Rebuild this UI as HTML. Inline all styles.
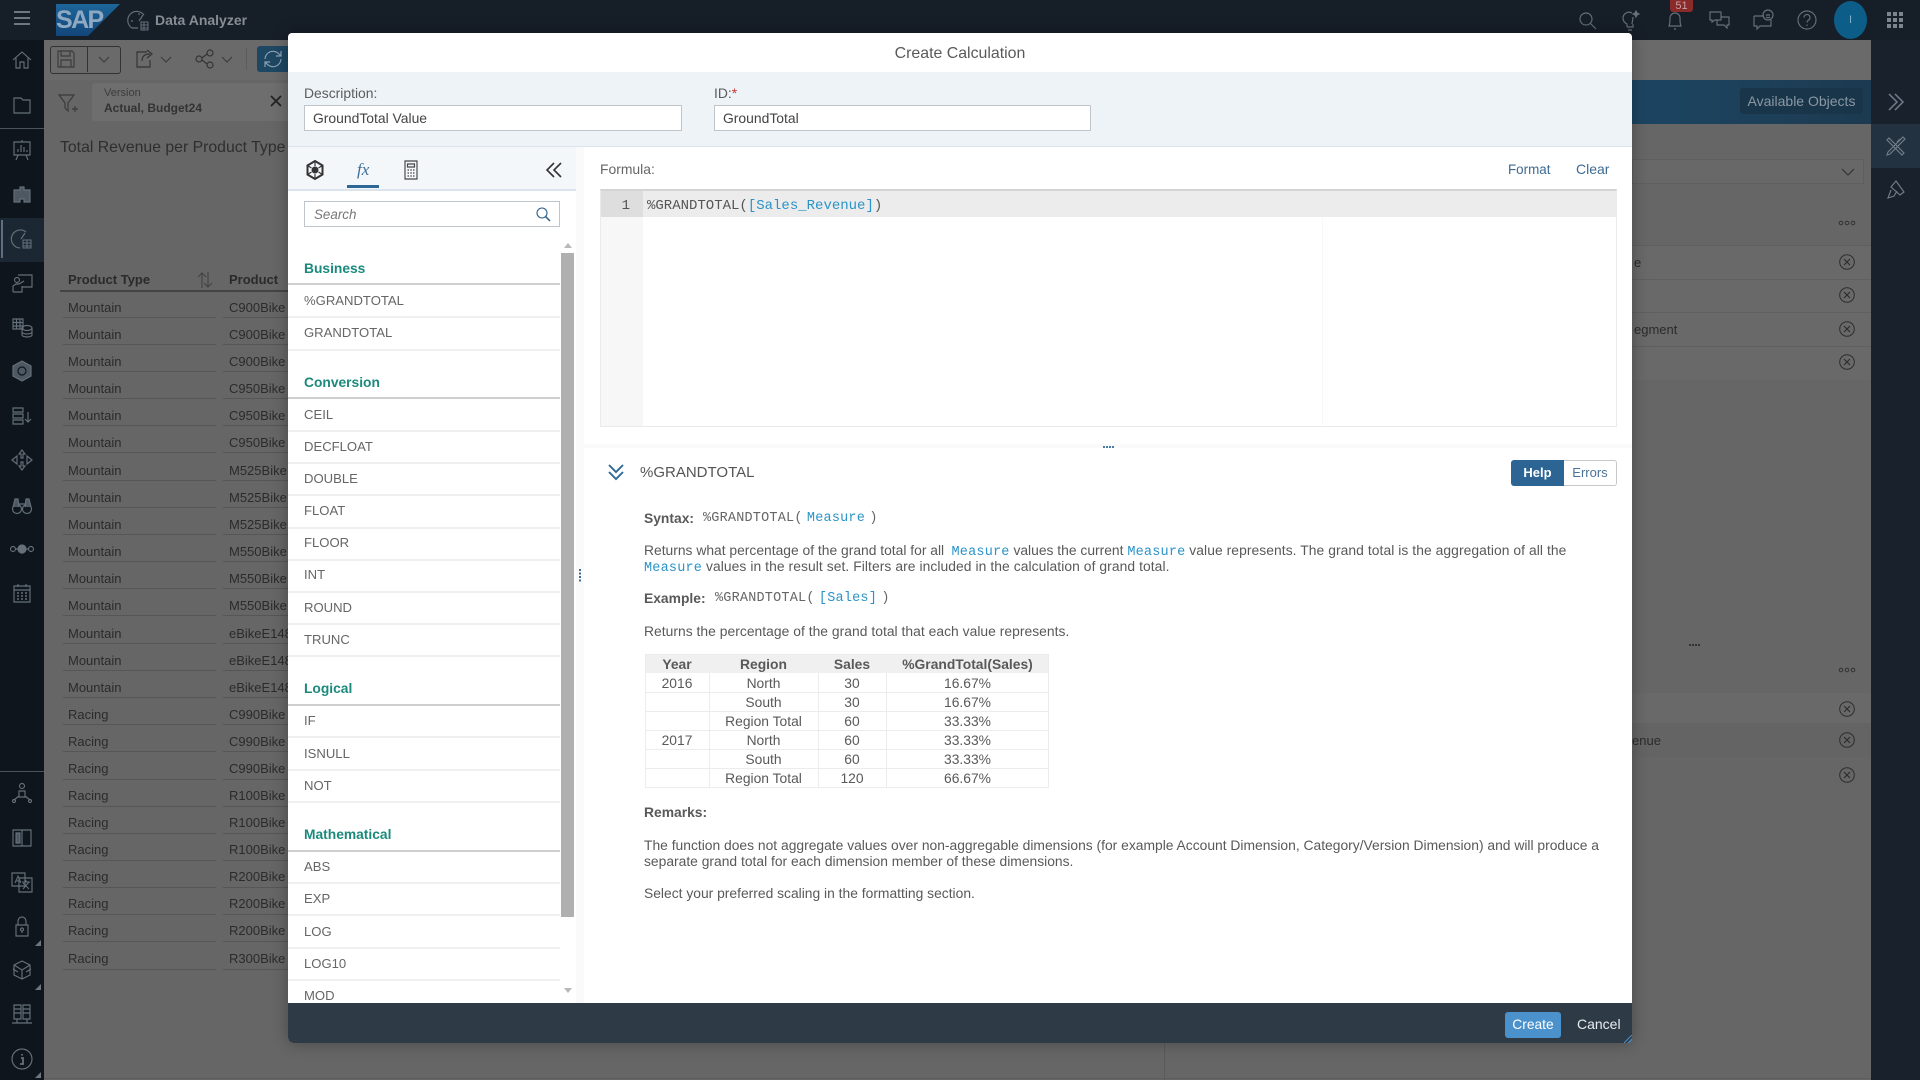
<!DOCTYPE html>
<html><head><meta charset="utf-8"><title>Create Calculation</title>
<style>
html,body{margin:0;padding:0;width:1920px;height:1080px;overflow:hidden;background:#666;font-family:"Liberation Sans",sans-serif;font-size:13px;color:#555}
.a{position:absolute}
.t{position:absolute;white-space:nowrap;line-height:18px;height:18px}
svg.i{position:absolute;width:24px;height:24px;fill:none;stroke:#65707a;stroke-width:1.15}
.rt{color:#2b2b2b;font-size:13px;margin-top:1px}
.rl{position:absolute;height:1px;background:#565656}
.li{position:absolute;left:304px;white-space:nowrap;line-height:18px;color:#666;font-size:13.1px;margin-top:1px}
.ll{position:absolute;left:288px;width:272px;height:2px;background:#f0f0f0}
.gh{position:absolute;left:304px;white-space:nowrap;line-height:18px;color:#1b8a7c;font-size:13.8px;font-weight:bold;margin-top:1px}
.gl{position:absolute;left:288px;width:272px;height:2px;background:#cfcfcf}
.m{font-family:"Liberation Mono",monospace;font-size:13.5px;letter-spacing:.2px;word-spacing:-4px}
.b{color:#2a93c8}
.h{color:#595959;font-size:13.85px}
.th{position:absolute;text-align:center;line-height:19px;height:19px;color:#595959;font-size:13.85px;margin-top:1px}
.xc{position:absolute;width:16px;height:16px;left:1839px}
</style></head><body>

<!-- background app -->
<div class="a" style="left:0;top:0;width:1920px;height:40px;background:#161e28"></div>
<div class="a" style="left:44px;top:40px;width:1827px;height:1040px;background:#666"></div>
<div class="a" style="left:44px;top:40px;width:1827px;height:40px;background:#6a6a6a"></div>
<div class="a" style="left:0;top:40px;width:44px;height:1040px;background:#0e151c"></div>
<div class="a" style="left:0;top:128px;width:44px;height:1px;background:#4c545b"></div>
<div class="a" style="left:0;top:771px;width:44px;height:1px;background:#4c545b"></div>
<div class="a" style="left:0;top:218px;width:44px;height:44px;background:#1b2733"></div>
<div class="a" style="left:1px;top:220px;width:2px;height:38px;background:#5f6f80"></div>

<!-- hamburger -->
<div class="a" style="left:14px;top:11px;width:16px;height:2px;background:#6f7880"></div>
<div class="a" style="left:14px;top:17px;width:16px;height:2px;background:#6f7880"></div>
<div class="a" style="left:14px;top:23px;width:16px;height:2px;background:#6f7880"></div>

<!-- SAP logo -->
<svg class="a" style="left:56px;top:4px;width:64px;height:32px" viewBox="0 0 64 32"><defs><linearGradient id="g" x1="0" y1="0" x2="0" y2="1"><stop offset="0" stop-color="#1d6699"/><stop offset="1" stop-color="#13467a"/></linearGradient></defs><polygon points="0,0 64,0 32,32 0,32" fill="url(#g)"/></svg>
<div class="t" style="left:56px;top:8px;height:24px;line-height:24px;font-size:25px;font-weight:bold;letter-spacing:-1.6px;color:#8fa9c2">SAP</div>
<svg class="i" style="left:127px;top:9px" viewBox="0 0 24 24"><path d="M17 6A9 9 0 1 0 5 19h6M12 12l4-6M4 12h2M12 4v2"/><path d="M14 13h7v8h-7zM14 16h7M14 19h7M17 13v8" stroke-width="1"/></svg>
<div class="t" style="left:155px;top:11px;font-weight:bold;font-size:14px;color:#868d94">Data Analyzer</div>

<!-- shell icons -->
<svg class="i" style="left:1575px;top:8px" viewBox="0 0 24 24"><circle cx="11" cy="11" r="6"/><path d="M15.5 15.5L21 21"/></svg>
<svg class="i" style="left:1618px;top:8px" viewBox="0 0 24 24"><path d="M9 19v-3c-2-1-4-3-4-6a6 6 0 0 1 9-5M15 16v3H9M10 22h4M15 9c0 3-1 5-1 7"/><path d="M18 3l1 2 2 1-2 1-1 2-1-2-2-1 2-1z" fill="#65707a"/></svg>
<svg class="i" style="left:1663px;top:8px" viewBox="0 0 24 24"><path d="M6 18c1-2 1-4 1-8a5 5 0 0 1 10 0c0 4 0 6 1 8zM11 21h2"/></svg>
<div class="a" style="left:1670px;top:0;width:23px;height:12px;background:#8b2a2a;border-radius:0 0 3px 3px;color:#c9a0a0;font-size:11px;line-height:12px;text-align:center">51</div>
<svg class="i" style="left:1707px;top:8px" viewBox="0 0 24 24"><path d="M3 4h11v8H8l-3 2v-2H3zM10 12v5h7l3 3v-3h2V9h-8"/></svg>
<svg class="i" style="left:1751px;top:8px" viewBox="0 0 24 24"><path d="M3 8h10M3 8v10h3v3l3-3h11v-6"/><circle cx="17" cy="7" r="5"/><path d="M15 7h4M15 9c1 1 3 1 4 0"/></svg>
<svg class="i" style="left:1795px;top:8px" viewBox="0 0 24 24"><circle cx="12" cy="12" r="9"/><path d="M9 9.5a3 3 0 1 1 4.5 2.6c-1 .6-1.5 1.2-1.5 2.4M12 16.5v1.5"/></svg>
<div class="a" style="left:1834px;top:1px;width:33px;height:38px;border-radius:50%;background:#0d5d89;color:#7fb0cb;font-size:11px;line-height:38px;text-align:center">I</div>
<div class="a" style="left:1887px;top:12px;width:16px;height:16px;background:repeating-linear-gradient(90deg,#7d858c 0 4px,transparent 4px 6px);"></div>
<div class="a" style="left:1887px;top:16px;width:16px;height:2px;background:#161e28"></div>
<div class="a" style="left:1887px;top:22px;width:16px;height:2px;background:#161e28"></div>

<!-- sidebar icons -->
<svg class="i" style="left:10px;top:48px" viewBox="0 0 24 24"><path d="M3 12l9-8 9 8M6 10v10h4v-6h4v6h4V10"/></svg>
<svg class="i" style="left:10px;top:93px" viewBox="0 0 24 24"><path d="M4 5h7l2 2h7v13H4z"/></svg>
<svg class="i" style="left:10px;top:138px" viewBox="0 0 24 24"><path d="M4 4h16v13H4zM12 2v2M8 17l-2 5M16 17l2 5M8 14v-3M11 14V7M14 14V9M17 14v-2"/></svg>
<svg class="i" style="left:10px;top:183px" viewBox="0 0 24 24"><path d="M4 7h6V4h4v3h6v12h-6v-3h-4v3H4z" fill="#4e5862"/></svg>
<svg class="i" style="left:10px;top:227px" viewBox="0 0 24 24"><path d="M16 5a9 9 0 1 0-6 16M11 12l4-6"/><path d="M13 13h8v8h-8zM13 16h8M13 19h8M17 13v8" stroke-width="1"/></svg>
<svg class="i" style="left:10px;top:271px" viewBox="0 0 24 24"><path d="M8 4h14v12H12"/><circle cx="7" cy="9" r="2.5"/><path d="M3 21v-6l3-2h3l5-3M3 21h9v-6"/></svg>
<svg class="i" style="left:10px;top:315px" viewBox="0 0 24 24"><path d="M3 4h10v10H3zM3 7.5h10M3 11h10M6.5 4v10M10 4v10"/><ellipse cx="17" cy="13" rx="5" ry="2.5"/><path d="M12 13v7c0 1 2 2 5 2s5-1 5-2v-7M12 17c0 1 2 2 5 2s5-1 5-2"/></svg>
<svg class="i" style="left:10px;top:359px" viewBox="0 0 24 24"><path d="M12 2l9 5v10l-9 5-9-5V7z" fill="#4e5862"/><circle cx="12" cy="12" r="4" stroke="#0e151c"/></svg>
<svg class="i" style="left:10px;top:404px" viewBox="0 0 24 24"><path d="M3 4h10v4H3zM3 10h10v4H3zM3 16h10v4H3zM18 8v10M15 15l3 3 3-3"/></svg>
<svg class="i" style="left:10px;top:448px" viewBox="0 0 24 24"><path d="M12 2l3 4h-2v4h-2V6H9zM12 22l-3-4h2v-4h2v4h2zM2 12l5-4v8zM22 12l-5-4v8z"/></svg>
<svg class="i" style="left:10px;top:493px" viewBox="0 0 24 24"><circle cx="7" cy="16" r="4.5"/><circle cx="17" cy="16" r="4.5"/><path d="M3 14l2-8h3l1 8M21 14l-2-8h-3l-1 8M9 11h6" fill="#4e5862"/></svg>
<svg class="i" style="left:10px;top:537px" viewBox="0 0 24 24"><circle cx="3" cy="12" r="2.5"/><circle cx="21" cy="12" r="2.5"/><circle cx="12" cy="12" r="4" fill="#65707a"/><path d="M5.5 12H8M16 12h2.5"/></svg>
<svg class="i" style="left:10px;top:581px" viewBox="0 0 24 24"><path d="M4 5h16v16H4zM4 9h16M8 3v3M16 3v3"/><path d="M7 12h2M11 12h2M15 12h2M7 15h2M11 15h2M15 15h2M7 18h2M11 18h2M15 18h2" stroke-width="1.6"/></svg>
<svg class="i" style="left:10px;top:781px" viewBox="0 0 24 24"><circle cx="12" cy="5" r="2.5"/><path d="M9 10h6v6H9zM9 15l-5 4M15 15l5 4"/><circle cx="4" cy="20" r="1.5"/><circle cx="20" cy="20" r="1.5"/></svg>
<svg class="i" style="left:10px;top:826px" viewBox="0 0 24 24"><path d="M3 4h18v16H3zM12 4v16M3 20h18"/><path d="M6 7h4v10H6z" fill="#4e5862"/></svg>
<svg class="i" style="left:10px;top:870px" viewBox="0 0 24 24"><path d="M2 3h13v13H2zM9 8h13v14H9z"/><path d="M5 13l3-7 3 7M6 11h4M12 12h8M16 10v2M13 19l6-7M13 13l6 6" stroke-width="1"/></svg>
<svg class="i" style="left:10px;top:914px" viewBox="0 0 24 24"><path d="M6 11h12v11H6zM8 11V7a4 4 0 0 1 8 0v4"/><circle cx="12" cy="15.5" r="1.5"/><path d="M12 17v2"/></svg>
<svg class="i" style="left:10px;top:958px" viewBox="0 0 24 24"><path d="M12 3l8 4v10l-8 4-8-4V7zM4 7l8 5 8-5M12 12v9M3 11l5 3M21 11l-5 3"/></svg>
<svg class="i" style="left:10px;top:1002px" viewBox="0 0 24 24"><path d="M4 3h7v14H4zM13 3h7v14h-7zM4 7h7M13 7h7M4 11h7M13 11h7M2 21h20M7 17v4M17 17v4"/></svg>
<svg class="i" style="left:10px;top:1047px" viewBox="0 0 24 24"><circle cx="12" cy="12" r="10"/><path d="M11 11h2v6M10 17h4M12 7v1.5" stroke-width="1.8"/></svg>
<svg class="a" style="left:35px;top:940px;width:6px;height:6px" viewBox="0 0 6 6"><polygon points="6,0 6,6 0,6" fill="#6d767e"/></svg>
<svg class="a" style="left:35px;top:984px;width:6px;height:6px" viewBox="0 0 6 6"><polygon points="6,0 6,6 0,6" fill="#6d767e"/></svg>
<svg class="a" style="left:35px;top:1072px;width:6px;height:6px" viewBox="0 0 6 6"><polygon points="6,0 6,6 0,6" fill="#6d767e"/></svg>

<!-- toolbar -->
<div class="a" style="left:50px;top:46px;width:69px;height:26px;border:1px solid #333;border-radius:3px;box-sizing:content-box"></div>
<div class="a" style="left:87px;top:46px;width:1px;height:26px;background:#333"></div>
<svg class="i" style="left:54px;top:47px" viewBox="0 0 24 24" ><path d="M4 4h14l2 2v14H4zM7 4v5h9V4M7 20v-7h10v7" stroke="#3a3a3a"/></svg>
<svg class="i" style="left:92px;top:47px" viewBox="0 0 24 24"><path d="M7 10l5 5 5-5" stroke="#3d3d3d"/></svg>
<svg class="i" style="left:133px;top:47px" viewBox="0 0 24 24"><path d="M14 5H4v15h13v-7M9 14c0-5 3-7 8-7M14 3l5 4-5 4" stroke="#333"/></svg>
<svg class="i" style="left:154px;top:47px" viewBox="0 0 24 24"><path d="M7 10l5 5 5-5" stroke="#3d3d3d"/></svg>
<svg class="i" style="left:193px;top:47px" viewBox="0 0 24 24"><circle cx="6" cy="12" r="3" stroke="#333"/><circle cx="17" cy="6" r="3" stroke="#333"/><circle cx="17" cy="18" r="3" stroke="#333"/><path d="M9 11l5-4M9 13l5 4" stroke="#333"/></svg>
<svg class="i" style="left:215px;top:47px" viewBox="0 0 24 24"><path d="M7 10l5 5 5-5" stroke="#3d3d3d"/></svg>
<div class="a" style="left:246px;top:48px;width:1px;height:22px;background:#5c5c5c"></div>
<div class="a" style="left:257px;top:46px;width:40px;height:26px;background:#1e4763;border-radius:3px"></div>
<svg class="i" style="left:261px;top:47px" viewBox="0 0 24 24"><path d="M4 12a8 8 0 0 1 14-5l2 2M20 12a8 8 0 0 1-14 5l-2-2M20 4v5h-5M4 20v-5h5" stroke="#8ea3b4"/></svg>

<!-- filter row -->
<svg class="i" style="left:56px;top:91px" viewBox="0 0 24 24"><path d="M3 4h15l-6 8v8l-3-3v-5zM16 18h6M19 15v6" stroke="#3a3a3a"/></svg>
<div class="a" style="left:92px;top:83px;width:210px;height:38px;background:#6e6e6e;border-radius:3px"></div>
<div class="t" style="left:104px;top:84px;font-size:11px;color:#3c3c3c">Version</div>
<div class="t" style="left:104px;top:99px;font-size:12px;font-weight:bold;color:#333">Actual, Budget24</div>
<svg class="i" style="left:264px;top:89px" viewBox="0 0 24 24"><path d="M7 7l10 10M17 7L7 17" stroke="#222" stroke-width="1.8"/></svg>
<div class="t" style="left:60px;top:139px;font-size:15.8px;color:#2e2e2e">Total Revenue per Product Type</div>

<!-- bg table -->
<div class="t" style="left:68px;top:271px;font-weight:bold;color:#2a2a2a">Product Type</div>
<svg class="i" style="left:193px;top:268px" viewBox="0 0 24 24"><path d="M9 20V5M5 9l4-4 4 4M15 4v15M11 15l4 4 4-4" stroke="#444"/></svg>
<div class="t" style="left:229px;top:271px;font-weight:bold;color:#2a2a2a">Product</div>
<div class="a" style="left:60px;top:290px;width:240px;height:2px;background:#444"></div>

<div class="t rt" style="left:68px;top:298px">Mountain</div><div class="t rt" style="left:229px;top:298px">C900Bike</div><div class="rl" style="left:63px;top:317px;width:153px"></div><div class="rl" style="left:223px;top:317px;width:70px"></div>
<div class="t rt" style="left:68px;top:325px">Mountain</div><div class="t rt" style="left:229px;top:325px">C900Bike</div><div class="rl" style="left:63px;top:344px;width:153px"></div><div class="rl" style="left:223px;top:344px;width:70px"></div>
<div class="t rt" style="left:68px;top:352px">Mountain</div><div class="t rt" style="left:229px;top:352px">C900Bike</div><div class="rl" style="left:63px;top:371px;width:153px"></div><div class="rl" style="left:223px;top:371px;width:70px"></div>
<div class="t rt" style="left:68px;top:379px">Mountain</div><div class="t rt" style="left:229px;top:379px">C950Bike</div><div class="rl" style="left:63px;top:398px;width:153px"></div><div class="rl" style="left:223px;top:398px;width:70px"></div>
<div class="t rt" style="left:68px;top:406px">Mountain</div><div class="t rt" style="left:229px;top:406px">C950Bike</div><div class="rl" style="left:63px;top:425px;width:153px"></div><div class="rl" style="left:223px;top:425px;width:70px"></div>
<div class="t rt" style="left:68px;top:433px">Mountain</div><div class="t rt" style="left:229px;top:433px">C950Bike</div><div class="rl" style="left:63px;top:452px;width:153px"></div><div class="rl" style="left:223px;top:452px;width:70px"></div>
<div class="t rt" style="left:68px;top:461px">Mountain</div><div class="t rt" style="left:229px;top:461px">M525Bike</div><div class="rl" style="left:63px;top:480px;width:153px"></div><div class="rl" style="left:223px;top:480px;width:70px"></div>
<div class="t rt" style="left:68px;top:488px">Mountain</div><div class="t rt" style="left:229px;top:488px">M525Bike</div><div class="rl" style="left:63px;top:507px;width:153px"></div><div class="rl" style="left:223px;top:507px;width:70px"></div>
<div class="t rt" style="left:68px;top:515px">Mountain</div><div class="t rt" style="left:229px;top:515px">M525Bike</div><div class="rl" style="left:63px;top:534px;width:153px"></div><div class="rl" style="left:223px;top:534px;width:70px"></div>
<div class="t rt" style="left:68px;top:542px">Mountain</div><div class="t rt" style="left:229px;top:542px">M550Bike</div><div class="rl" style="left:63px;top:561px;width:153px"></div><div class="rl" style="left:223px;top:561px;width:70px"></div>
<div class="t rt" style="left:68px;top:569px">Mountain</div><div class="t rt" style="left:229px;top:569px">M550Bike</div><div class="rl" style="left:63px;top:588px;width:153px"></div><div class="rl" style="left:223px;top:588px;width:70px"></div>
<div class="t rt" style="left:68px;top:596px">Mountain</div><div class="t rt" style="left:229px;top:596px">M550Bike</div><div class="rl" style="left:63px;top:615px;width:153px"></div><div class="rl" style="left:223px;top:615px;width:70px"></div>
<div class="t rt" style="left:68px;top:624px">Mountain</div><div class="t rt" style="left:229px;top:624px">eBikeE148</div><div class="rl" style="left:63px;top:643px;width:153px"></div><div class="rl" style="left:223px;top:643px;width:70px"></div>
<div class="t rt" style="left:68px;top:651px">Mountain</div><div class="t rt" style="left:229px;top:651px">eBikeE148</div><div class="rl" style="left:63px;top:670px;width:153px"></div><div class="rl" style="left:223px;top:670px;width:70px"></div>
<div class="t rt" style="left:68px;top:678px">Mountain</div><div class="t rt" style="left:229px;top:678px">eBikeE148</div><div class="rl" style="left:63px;top:697px;width:153px"></div><div class="rl" style="left:223px;top:697px;width:70px"></div>
<div class="t rt" style="left:68px;top:705px">Racing</div><div class="t rt" style="left:229px;top:705px">C990Bike</div><div class="rl" style="left:63px;top:724px;width:153px"></div><div class="rl" style="left:223px;top:724px;width:70px"></div>
<div class="t rt" style="left:68px;top:732px">Racing</div><div class="t rt" style="left:229px;top:732px">C990Bike</div><div class="rl" style="left:63px;top:751px;width:153px"></div><div class="rl" style="left:223px;top:751px;width:70px"></div>
<div class="t rt" style="left:68px;top:759px">Racing</div><div class="t rt" style="left:229px;top:759px">C990Bike</div><div class="rl" style="left:63px;top:779px;width:153px"></div><div class="rl" style="left:223px;top:779px;width:70px"></div>
<div class="t rt" style="left:68px;top:786px">Racing</div><div class="t rt" style="left:229px;top:786px">R100Bike</div><div class="rl" style="left:63px;top:806px;width:153px"></div><div class="rl" style="left:223px;top:806px;width:70px"></div>
<div class="t rt" style="left:68px;top:813px">Racing</div><div class="t rt" style="left:229px;top:813px">R100Bike</div><div class="rl" style="left:63px;top:833px;width:153px"></div><div class="rl" style="left:223px;top:833px;width:70px"></div>
<div class="t rt" style="left:68px;top:840px">Racing</div><div class="t rt" style="left:229px;top:840px">R100Bike</div><div class="rl" style="left:63px;top:860px;width:153px"></div><div class="rl" style="left:223px;top:860px;width:70px"></div>
<div class="t rt" style="left:68px;top:867px">Racing</div><div class="t rt" style="left:229px;top:867px">R200Bike</div><div class="rl" style="left:63px;top:887px;width:153px"></div><div class="rl" style="left:223px;top:887px;width:70px"></div>
<div class="t rt" style="left:68px;top:894px">Racing</div><div class="t rt" style="left:229px;top:894px">R200Bike</div><div class="rl" style="left:63px;top:914px;width:153px"></div><div class="rl" style="left:223px;top:914px;width:70px"></div>
<div class="t rt" style="left:68px;top:921px">Racing</div><div class="t rt" style="left:229px;top:921px">R200Bike</div><div class="rl" style="left:63px;top:941px;width:153px"></div><div class="rl" style="left:223px;top:941px;width:70px"></div>
<div class="t rt" style="left:68px;top:949px">Racing</div><div class="t rt" style="left:229px;top:949px">R300Bike</div><div class="rl" style="left:63px;top:969px;width:153px"></div><div class="rl" style="left:223px;top:969px;width:70px"></div>

<!-- right panel -->
<div class="a" style="left:1632px;top:80px;width:239px;height:44px;background:linear-gradient(90deg,#1c4562,#1d3f58 60%,#1c3a50)"></div>
<div class="a" style="left:1740px;top:88px;width:123px;height:26px;background:#193549;border-radius:3px;color:#8a98a4;line-height:26px;text-align:center;font-size:14px">Available Objects</div>
<div class="a" style="left:1871px;top:40px;width:49px;height:1040px;background:#19222c"></div>
<div class="a" style="left:1871px;top:124px;width:49px;height:44px;background:#223240"></div>
<svg class="i" style="left:1884px;top:90px" viewBox="0 0 24 24"><path d="M5 4l8 8-8 8M11 4l8 8-8 8" stroke="#717d88" stroke-width="1.5"/></svg>
<svg class="i" style="left:1884px;top:134px" viewBox="0 0 24 24"><path d="M5 4l15 15-2 2L3 6zM19 3l2 2-15 15-3 1 1-3zM13 8l3-3" stroke="#717d88"/></svg>
<svg class="i" style="left:1884px;top:178px" viewBox="0 0 24 24"><path d="M12 3l8 11-4 3-9-8zM7 12l-3 8 6-2 3-5" stroke="#717d88"/></svg>
<div class="a" style="left:1632px;top:159px;width:232px;height:25px;border:1px solid #5f5f5f;background:#686868;box-sizing:border-box"></div>
<svg class="i" style="left:1836px;top:160px" viewBox="0 0 24 24"><path d="M6 9l6 6 6-6" stroke="#333"/></svg>
<div class="a" style="left:1632px;top:245px;width:239px;height:1px;background:#5f5f5f"></div>
<div class="a" style="left:1632px;top:246px;width:239px;height:33px;background:#696969"></div>
<div class="a" style="left:1632px;top:279px;width:239px;height:33px;background:#696969;border-top:1px solid #5f5f5f"></div>
<div class="a" style="left:1632px;top:312px;width:239px;height:33px;background:#696969;border-top:1px solid #5f5f5f"></div>
<div class="a" style="left:1632px;top:346px;width:239px;height:33px;background:#696969;border-top:1px solid #5f5f5f"></div>
<div class="a" style="left:1632px;top:693px;width:239px;height:30px;background:#696969"></div>
<div class="a" style="left:1632px;top:723px;width:239px;height:34px;background:#646464"></div>
<div class="t rt" style="left:1634px;top:253px">e</div>
<div class="t rt" style="left:1634px;top:320px">egment</div>
<div class="t rt" style="left:1632px;top:731px">enue</div>
<svg class="a" style="left:1838px;top:220px;width:18px;height:6px" viewBox="0 0 18 6"><circle cx="3" cy="3" r="1.800" fill="none" stroke="#333"/><circle cx="9" cy="3" r="1.800" fill="none" stroke="#333"/><circle cx="15" cy="3" r="1.800" fill="none" stroke="#333"/></svg>
<svg class="a" style="left:1838px;top:667px;width:18px;height:6px" viewBox="0 0 18 6"><circle cx="3" cy="3" r="1.800" fill="none" stroke="#333"/><circle cx="9" cy="3" r="1.800" fill="none" stroke="#333"/><circle cx="15" cy="3" r="1.800" fill="none" stroke="#333"/></svg>
<div class="a" style="left:1689px;top:644px;width:12px;height:2px;background:repeating-linear-gradient(90deg,#333 0 2px,transparent 2px 3px)"></div>
<svg class="xc" style="top:254px" viewBox="0 0 16 16"><circle cx="8" cy="8" r="7.3" fill="none" stroke="#2d2d2d"/><path d="M5 5l6 6M11 5l-6 6" stroke="#2d2d2d" stroke-width="1.2"/></svg>
<svg class="xc" style="top:287px" viewBox="0 0 16 16"><circle cx="8" cy="8" r="7.3" fill="none" stroke="#2d2d2d"/><path d="M5 5l6 6M11 5l-6 6" stroke="#2d2d2d" stroke-width="1.2"/></svg>
<svg class="xc" style="top:321px" viewBox="0 0 16 16"><circle cx="8" cy="8" r="7.3" fill="none" stroke="#2d2d2d"/><path d="M5 5l6 6M11 5l-6 6" stroke="#2d2d2d" stroke-width="1.2"/></svg>
<svg class="xc" style="top:354px" viewBox="0 0 16 16"><circle cx="8" cy="8" r="7.3" fill="none" stroke="#2d2d2d"/><path d="M5 5l6 6M11 5l-6 6" stroke="#2d2d2d" stroke-width="1.2"/></svg>
<svg class="xc" style="top:701px" viewBox="0 0 16 16"><circle cx="8" cy="8" r="7.3" fill="none" stroke="#2d2d2d"/><path d="M5 5l6 6M11 5l-6 6" stroke="#2d2d2d" stroke-width="1.2"/></svg>
<svg class="xc" style="top:732px" viewBox="0 0 16 16"><circle cx="8" cy="8" r="7.3" fill="none" stroke="#2d2d2d"/><path d="M5 5l6 6M11 5l-6 6" stroke="#2d2d2d" stroke-width="1.2"/></svg>
<svg class="xc" style="top:767px" viewBox="0 0 16 16"><circle cx="8" cy="8" r="7.3" fill="none" stroke="#2d2d2d"/><path d="M5 5l6 6M11 5l-6 6" stroke="#2d2d2d" stroke-width="1.2"/></svg>
<div class="a" style="left:1164px;top:1043px;width:1px;height:37px;background:#5a5a5a"></div>
<div class="a" style="left:44px;top:1078px;width:1827px;height:1px;background:#5d5d5d"></div>

<!-- MODAL -->
<div class="a" style="left:288px;top:33px;width:1344px;height:1010px;background:#fff;border-radius:4px 4px 5px 5px;box-shadow:0 0 16px rgba(0,0,0,.3)"></div>
<div class="t" style="left:288px;top:45px;width:1344px;text-align:center;font-size:15.9px;color:#5a5a5a">Create Calculation</div>
<div class="a" style="left:288px;top:72px;width:1344px;height:75px;background:#eef3f8;border-bottom:1px solid #dde3ea;box-sizing:border-box"></div>
<div class="t" style="left:304px;top:84px;color:#5c5c5c;font-size:13.9px">Description:</div>
<div class="a" style="left:304px;top:105px;width:378px;height:26px;background:#fff;border:1px solid #bfc5ca;box-sizing:border-box"></div>
<div class="t" style="left:313px;top:109px;color:#444;font-size:13.9px">GroundTotal Value</div>
<div class="t" style="left:714px;top:84px;color:#5c5c5c;font-size:13.9px">ID:<span style="color:#c33">*</span></div>
<div class="a" style="left:714px;top:105px;width:377px;height:26px;background:#fff;border:1px solid #bfc5ca;box-sizing:border-box"></div>
<div class="t" style="left:723px;top:109px;color:#444;font-size:13.9px">GroundTotal</div>

<!-- left panel -->
<div class="a" style="left:288px;top:147px;width:288px;height:42px;background:#f4f7fa;border-bottom:2px solid #dbe4ec;box-sizing:content-box"></div>
<div class="a" style="left:576px;top:147px;width:8px;height:856px;background:#fafafa"></div>
<svg class="i" style="left:303px;top:158px;width:24px;height:24px" viewBox="0 0 24 24"><path d="M12 3l7.5 4.5v9L12 21l-7.5-4.5v-9z" stroke="#333" stroke-width="2"/><circle cx="12" cy="12" r="3.5" fill="#333" stroke="none"/><path d="M12 3v5M12 16v5M4.5 7.5l4 2.5M19.5 16.500l-4-2.500M19.500 7.500l-4 2.500M4.500 16.500l4-2.500" stroke="#333"/></svg>
<div class="t" style="left:357px;top:161px;width:15px;font-family:'Liberation Serif',serif;font-style:italic;font-size:17px;color:#3f6f9b">fx</div>
<div class="a" style="left:347px;top:185px;width:32px;height:3px;background:#2d6796"></div>
<svg class="i" style="left:399px;top:158px" viewBox="0 0 24 24"><path d="M6 3h12v18H6zM8.500 6h7v3h-7zM8.500 12h1.500M11.300 12h1.500M14 12h1.500M8.500 15h1.500M11.300 15h1.500M14 15h1.500M8.500 18h1.500M11.300 18h1.500M14 18h1.500" stroke="#444"/></svg>
<svg class="i" style="left:543px;top:158px" viewBox="0 0 24 24"><path d="M11 5l-7 7 7 7M18 5l-7 7 7 7" stroke="#333" stroke-width="1.6"/></svg>

<div class="a" style="left:304px;top:201px;width:256px;height:26px;background:#fff;border:1px solid #bfc5ca;box-sizing:border-box"></div>
<div class="t" style="left:314px;top:206px;font-style:italic;color:#777;font-size:13.4px">Search</div>
<svg class="a" style="left:535px;top:206px;width:17px;height:17px" viewBox="0 0 17 17"><circle cx="7" cy="7" r="5" fill="none" stroke="#2d5f8a" stroke-width="1.1"/><path d="M10.700 10.700L15 15" stroke="#2d5f8a" stroke-width="1.500"/></svg>

<!-- scrollbar -->
<div class="a" style="left:561px;top:253px;width:13px;height:664px;background:#b0b0b0"></div>
<svg class="a" style="left:563px;top:243px;width:10px;height:6px" viewBox="0 0 10 6"><polygon points="5,0 9,5 1,5" fill="#b8b8b8"/></svg>
<svg class="a" style="left:563px;top:988px;width:10px;height:6px" viewBox="0 0 10 6"><polygon points="1,0 9,0 5,5" fill="#b8b8b8"/></svg>

<div class="gh" style="top:259px">Business</div><div class="gl" style="top:283px"></div>
<div class="li" style="top:291px">%GRANDTOTAL</div><div class="ll" style="top:316px"></div>
<div class="li" style="top:323px">GRANDTOTAL</div><div class="ll" style="top:349px"></div>
<div class="gh" style="top:373px">Conversion</div><div class="gl" style="top:397px"></div>
<div class="li" style="top:405px">CEIL</div><div class="ll" style="top:430px"></div>
<div class="li" style="top:437px">DECFLOAT</div><div class="ll" style="top:462px"></div>
<div class="li" style="top:469px">DOUBLE</div><div class="ll" style="top:494px"></div>
<div class="li" style="top:501px">FLOAT</div><div class="ll" style="top:527px"></div>
<div class="li" style="top:533px">FLOOR</div><div class="ll" style="top:559px"></div>
<div class="li" style="top:565px">INT</div><div class="ll" style="top:591px"></div>
<div class="li" style="top:598px">ROUND</div><div class="ll" style="top:623px"></div>
<div class="li" style="top:630px">TRUNC</div><div class="ll" style="top:655px"></div>
<div class="gh" style="top:679px">Logical</div><div class="gl" style="top:704px"></div>
<div class="li" style="top:711px">IF</div><div class="ll" style="top:736px"></div>
<div class="li" style="top:744px">ISNULL</div><div class="ll" style="top:769px"></div>
<div class="li" style="top:776px">NOT</div><div class="ll" style="top:801px"></div>
<div class="gh" style="top:825px">Mathematical</div><div class="gl" style="top:850px"></div>
<div class="li" style="top:857px">ABS</div><div class="ll" style="top:882px"></div>
<div class="li" style="top:889px">EXP</div><div class="ll" style="top:914px"></div>
<div class="li" style="top:922px">LOG</div><div class="ll" style="top:947px"></div>
<div class="li" style="top:954px">LOG10</div><div class="ll" style="top:979px"></div>
<div class="li" style="top:986px">MOD</div>

<div class="a" style="left:579px;top:569px;width:2px;height:13px;background:repeating-linear-gradient(180deg,#3a6d9c 0 2px,transparent 2px 3.500px)"></div>

<!-- Formula -->
<div class="t" style="left:600px;top:160px;color:#666;font-size:13.9px">Formula:</div>
<div class="t" style="left:1508px;top:161px;color:#3d6a93;font-size:13.4px">Format</div>
<div class="t" style="left:1576px;top:160px;color:#3d6a93;font-size:14px">Clear</div>
<div class="a" style="left:600px;top:189px;width:1017px;height:238px;background:#fff;border:1px solid #eaeaea;border-top:2px solid #d4d4d4;box-sizing:border-box"></div>
<div class="a" style="left:601px;top:191px;width:42px;height:235px;background:#f7f7f7"></div>
<div class="a" style="left:601px;top:191px;width:1015px;height:26px;background:#ececec"></div>
<div class="a" style="left:601px;top:191px;width:42px;height:26px;background:#dedede"></div>
<div class="a" style="left:1322px;top:217px;width:1px;height:208px;background:#f8f8f8"></div>
<div class="t" style="left:602px;top:197px;width:28px;text-align:right;font-family:'Liberation Mono',monospace;font-size:14px;color:#555">1</div>
<div class="t" style="left:647px;top:197px;font-family:'Liberation Mono',monospace;font-size:14px;color:#555">%GRANDTOTAL(<span class="b">[Sales_Revenue]</span>)</div>

<!-- splitter -->
<div class="a" style="left:584px;top:444px;width:1048px;height:4px;background:#fafafa"></div>
<div class="a" style="left:1103px;top:446px;width:11px;height:2px;background:repeating-linear-gradient(90deg,#4a7aa5 0 2px,transparent 2px 3px)"></div>

<!-- help -->
<svg class="i" style="left:604px;top:460px" viewBox="0 0 24 24"><path d="M5 5l7 7 7-7M5 12l7 7 7-7" stroke="#2d6796" stroke-width="1.900"/></svg>
<div class="t" style="left:640px;top:464px;font-size:15px;color:#555">%GRANDTOTAL</div>
<div class="a" style="left:1511px;top:460px;width:53px;height:26px;background:#2c6594;border-radius:3px 0 0 3px;color:#fff;font-weight:bold;text-align:center;line-height:26px">Help</div>
<div class="a" style="left:1564px;top:460px;width:53px;height:26px;background:#fff;border:1px solid #c6c9cc;border-left:0;box-sizing:border-box;border-radius:0 3px 3px 0;color:#4a7298;text-align:center;line-height:24px">Errors</div>

<div class="t h" style="left:644px;top:509px"><b>Syntax:</b></div>
<div class="t m" style="left:703px;top:510px;color:#666">%GRANDTOTAL( <span class="b">Measure</span> )</div>
<div class="t h" style="left:644px;top:541px">Returns what percentage of the grand total for all <span class="m b" style="margin-left:3.5px">Measure</span> values the current <span class="m b">Measure</span> <span style="letter-spacing:.065px">value represents. The grand total is the aggregation of all the</span></div>
<div class="t h" style="left:644px;top:557px"><span class="m b">Measure</span> <span style="letter-spacing:.07px">values in the result set. Filters are included in the calculation of grand total.</span></div>
<div class="t h" style="left:644px;top:589px"><b>Example:</b></div>
<div class="t m" style="left:715px;top:590px;color:#666">%GRANDTOTAL( <span class="b">[Sales]</span> )</div>
<div class="t h" style="left:644px;top:622px;letter-spacing:.03px">Returns the percentage of the grand total that each value represents.</div>

<!-- help table -->
<div class="a" style="left:645px;top:654px;width:404px;height:19px;background:#f0f0f0"></div>
<div class="a" style="left:645px;top:654px;width:404px;height:134px;border:1px solid #ececec;box-sizing:border-box"></div>
<div class="a" style="left:645px;top:692px;width:404px;height:1px;background:#ececec"></div>
<div class="a" style="left:645px;top:711px;width:404px;height:1px;background:#ececec"></div>
<div class="a" style="left:645px;top:730px;width:404px;height:1px;background:#ececec"></div>
<div class="a" style="left:645px;top:749px;width:404px;height:1px;background:#ececec"></div>
<div class="a" style="left:645px;top:768px;width:404px;height:1px;background:#ececec"></div>
<div class="a" style="left:709px;top:673px;width:1px;height:115px;background:#ececec"></div>
<div class="a" style="left:818px;top:673px;width:1px;height:115px;background:#ececec"></div>
<div class="a" style="left:886px;top:673px;width:1px;height:115px;background:#ececec"></div>
<div class="th" style="left:645px;top:654px;width:64px"><b>Year</b></div><div class="th" style="left:709px;top:654px;width:109px"><b>Region</b></div><div class="th" style="left:818px;top:654px;width:68px"><b>Sales</b></div><div class="th" style="left:886px;top:654px;width:163px"><b>%GrandTotal(Sales)</b></div>
<div class="th" style="left:645px;top:673px;width:64px">2016</div><div class="th" style="left:709px;top:673px;width:109px">North</div><div class="th" style="left:818px;top:673px;width:68px">30</div><div class="th" style="left:886px;top:673px;width:163px">16.67%</div>
<div class="th" style="left:709px;top:692px;width:109px">South</div><div class="th" style="left:818px;top:692px;width:68px">30</div><div class="th" style="left:886px;top:692px;width:163px">16.67%</div>
<div class="th" style="left:709px;top:711px;width:109px">Region Total</div><div class="th" style="left:818px;top:711px;width:68px">60</div><div class="th" style="left:886px;top:711px;width:163px">33.33%</div>
<div class="th" style="left:645px;top:730px;width:64px">2017</div><div class="th" style="left:709px;top:730px;width:109px">North</div><div class="th" style="left:818px;top:730px;width:68px">60</div><div class="th" style="left:886px;top:730px;width:163px">33.33%</div>
<div class="th" style="left:709px;top:749px;width:109px">South</div><div class="th" style="left:818px;top:749px;width:68px">60</div><div class="th" style="left:886px;top:749px;width:163px">33.33%</div>
<div class="th" style="left:709px;top:768px;width:109px">Region Total</div><div class="th" style="left:818px;top:768px;width:68px">120</div><div class="th" style="left:886px;top:768px;width:163px">66.67%</div>

<div class="t h" style="left:644px;top:803px"><b>Remarks:</b></div>
<div class="t h" style="left:644px;top:836px">The function does not aggregate values over non-aggregable dimensions (for example Account Dimension, Category/Version Dimension) and will produce a</div>
<div class="t h" style="left:644px;top:852px">separate grand total for each dimension member of these dimensions.</div>
<div class="t h" style="left:644px;top:884px">Select your preferred scaling in the formatting section.</div>

<!-- footer -->
<div class="a" style="left:288px;top:1003px;width:1344px;height:40px;background:#2e3b47;border-radius:0 0 5px 5px"></div>
<div class="a" style="left:1505px;top:1012px;width:56px;height:26px;background:#4b92cc;border-radius:3px;color:#fff;text-align:center;line-height:25px;font-size:13.8px">Create</div>
<div class="t" style="left:1577px;top:1015px;color:#e8ecef;font-size:14px">Cancel</div>
<svg class="a" style="left:1624px;top:1035px;width:8px;height:8px" viewBox="0 0 8 8"><path d="M0 8L8 0M4 8L8 4" stroke="#4b92cc"/></svg>

</body></html>
